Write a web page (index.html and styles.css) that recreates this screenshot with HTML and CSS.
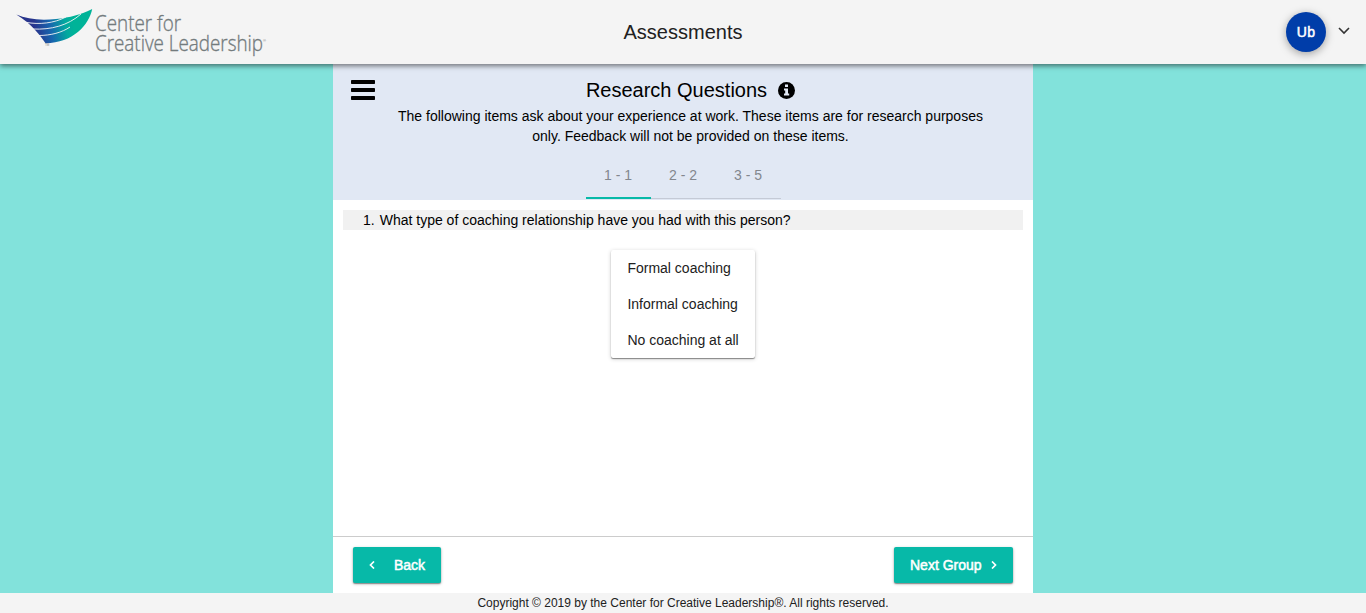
FILE: index.html
```
<!DOCTYPE html>
<html lang="en">
<head>
<meta charset="utf-8">
<title>Assessments</title>
<link rel="stylesheet" href="styles.css">
</head>
<body>
<header class="topbar">
  <svg class="logo" width="280" height="64" viewBox="0 0 280 64" role="img" aria-label="Center for Creative Leadership">
    <defs>
      <linearGradient id="wing" gradientUnits="userSpaceOnUse" x1="35" y1="30" x2="73" y2="23">
        <stop offset="0" stop-color="#28348c"/>
        <stop offset=".4" stop-color="#1765ae"/>
        <stop offset=".8" stop-color="#02a99f"/>
        <stop offset="1" stop-color="#00b398"/>
      </linearGradient>
    </defs>
    <path fill="url(#wing)" d="M16.300 14.600C27 19 40 21 56 19C70 17.600 81 14.500 92.200 9C89 25 73 43 45.500 43.200C41 37 32 24 16.300 14.600Z"/>
    <g class="feather">
      <path d="M26 22.300C39 24.800 54 23.300 66 17"/>
      <path d="M32.500 29C51 30 68 25.500 81 14"/>
      <path d="M38.500 35.500C51 35.500 62 32.500 70 27"/>
    </g>
    <text class="tm" x="45" y="45.500">TM</text>
    <text class="brand" x="95" y="30.500" textLength="86" lengthAdjust="spacingAndGlyphs">Center for</text>
    <text class="brand" x="95" y="50.500" textLength="168" lengthAdjust="spacingAndGlyphs">Creative Leadership</text>
    <text class="reg" x="263" y="42">®</text>
  </svg>
  <h1 class="page-title">Assessments</h1>
  <div class="account">
    <span class="avatar">Ub</span>
    <svg width="12" height="8" viewBox="0 0 12 8"><path class="caret" d="M1 1l5 5 5-5"/></svg>
  </div>
</header>
<main class="panel">
  <section class="intro">
    <svg class="menu" width="24" height="20" viewBox="0 0 24 20"><rect width="24" height="4" rx=".7"/><rect y="8" width="24" height="4" rx=".7"/><rect y="16" width="24" height="4" rx=".7"/></svg>
    <div class="intro-body">
      <h2 class="heading"><span>Research Questions</span>
        <svg class="info" width="17" height="17" viewBox="0 0 17 17"><circle cx="8.500" cy="8.500" r="8.500"/><path fill="#e1e8f4" d="M7 2.500h3v2.600H7zM6 6.500h4v5h1.200v2H6v-2h1.200v-3H6z"/></svg>
      </h2>
      <p class="lead"><span class="line">The following items ask about your experience at work. These items are for research purposes</span><span class="line">only. Feedback will not be provided on these items.</span></p>
    </div>
    <nav class="tabs"><span class="tab active">1 - 1</span><span class="tab">2 - 2</span><span class="tab">3 - 5</span></nav>
  </section>
  <section class="questions">
    <div class="question"><span class="number">1.</span><span>What type of coaching relationship have you had with this person?</span></div>
    <div class="options"><div class="option">Formal coaching</div><div class="option">Informal coaching</div><div class="option">No coaching at all</div></div>
  </section>
  <div class="actions">
    <button class="btn back"><svg width="6" height="8" viewBox="0 0 6 8"><path class="chev" d="M5 .5L1.500 4 5 7.500"/></svg><span>Back</span></button>
    <button class="btn next"><span>Next Group</span><svg width="6" height="8" viewBox="0 0 6 8"><path class="chev" d="M1 .5L4.500 4 1 7.500"/></svg></button>
  </div>
</main>
<footer class="footer">Copyright © 2019 by the Center for Creative Leadership®. All rights reserved.</footer>
</body>
</html>
```
FILE: styles.css
```
* { box-sizing: border-box; }
body {
  margin: 0;
  height: 613px;
  overflow: hidden;
  display: flex;
  flex-direction: column;
  align-items: center;
  background: #82e2db;
  color: #000;
  font-family: "Liberation Sans", Arial, sans-serif;
  font-size: 14px;
}
h1, h2, p { margin: 0; font-weight: 400; }
.topbar {
  width: 100%;
  height: 64px;
  flex: none;
  display: grid;
  grid-template-columns: 1fr auto 1fr;
  align-items: center;
  background: #f4f4f4;
  box-shadow: 0 2px 5px rgba(0, 0, 0, .5);
  z-index: 1;
}
.feather { fill: none; stroke: #f4f4f4; stroke-width: .9; }
.brand {
  font-family: "Open Sans", sans-serif;
  font-weight: 300;
  font-size: 22px;
  fill: #737b7d;
  stroke: #737b7d;
  stroke-width: .35;
}
.tm { font-size: 3px; fill: #888; }
.reg { font-size: 4px; fill: #777; }
.page-title { font-size: 20px; line-height: 24px; color: #212121; }
.account {
  justify-self: end;
  display: flex;
  align-items: center;
  gap: 12px;
  padding-right: 16px;
}
.avatar {
  width: 40px;
  height: 40px;
  border-radius: 50%;
  background: #003da9;
  color: #fff;
  font-weight: 400;
  -webkit-text-stroke: .5px #fff;
  letter-spacing: .3px;
  line-height: 41px;
  text-align: center;
  box-shadow: 0 2px 8px rgba(0, 0, 0, .35);
}
.account svg { margin-bottom: 3px; }
.caret { fill: none; stroke: #333; stroke-width: 1.6; }
.panel {
  width: 700px;
  flex: 1;
  display: flex;
  flex-direction: column;
  background: #fff;
}
.intro {
  height: 136px;
  display: grid;
  grid-template-columns: 65px 1fr 50px;
  grid-template-rows: 88px 48px;
  background: #e1e8f4;
}
.menu { margin: 16px 0 0 18px; }
.intro-body { padding-top: 13px; text-align: center; }
.heading {
  display: flex;
  justify-content: center;
  align-items: center;
  gap: 11px;
  font-size: 20px;
  line-height: 26px;
}
.lead { padding-top: 3px; line-height: 20px; }
.line { display: block; white-space: nowrap; }
.tabs {
  grid-column: 1 / -1;
  justify-self: center;
  display: flex;
  height: 47px;
  border-bottom: 1px solid #c4cad6;
}
.tab {
  width: 65px;
  height: 47px;
  line-height: 46px;
  text-align: center;
  color: #83878e;
}
.tab.active { border-bottom: 2px solid #07b9a8; }
.questions {
  flex: 1;
  display: flex;
  flex-direction: column;
  align-items: center;
  padding: 10px;
}
.question {
  align-self: stretch;
  display: flex;
  gap: 5px;
  height: 20px;
  padding-left: 20px;
  line-height: 20px;
  background: #f1f1f1;
}
.options {
  width: 144px;
  margin-top: 20px;
  border-radius: 2px;
  color: #212121;
  box-shadow: 0 1px 4px rgba(0, 0, 0, .2), 0 1px 1px rgba(0, 0, 0, .4);
}
.option { height: 36px; padding-left: 16.4px; line-height: 36px; white-space: nowrap; }
.actions {
  height: 57px;
  display: flex;
  justify-content: space-between;
  padding: 10px 20px;
  border-top: 1px solid #ccc;
}
.btn {
  height: 36px;
  display: flex;
  align-items: center;
  padding: 0 16px;
  border: 0;
  border-radius: 2px;
  background: #07b9a8;
  color: #fff;
  font: 400 14px "Liberation Sans", Arial, sans-serif;
  -webkit-text-stroke: .5px #fff;
  white-space: nowrap;
  box-shadow: 0 1px 3px rgba(0, 0, 0, .3), 0 1px 1px rgba(0, 0, 0, .3);
}
.back { width: 88px; justify-content: space-between; }
.next { width: 119px; justify-content: space-between; }
.chev { fill: none; stroke: #fff; stroke-width: 1.7; }
.footer {
  width: 100%;
  height: 20px;
  flex: none;
  background: #f4f4f4;
  color: #212121;
  font-size: 12px;
  line-height: 20px;
  text-align: center;
}
```
